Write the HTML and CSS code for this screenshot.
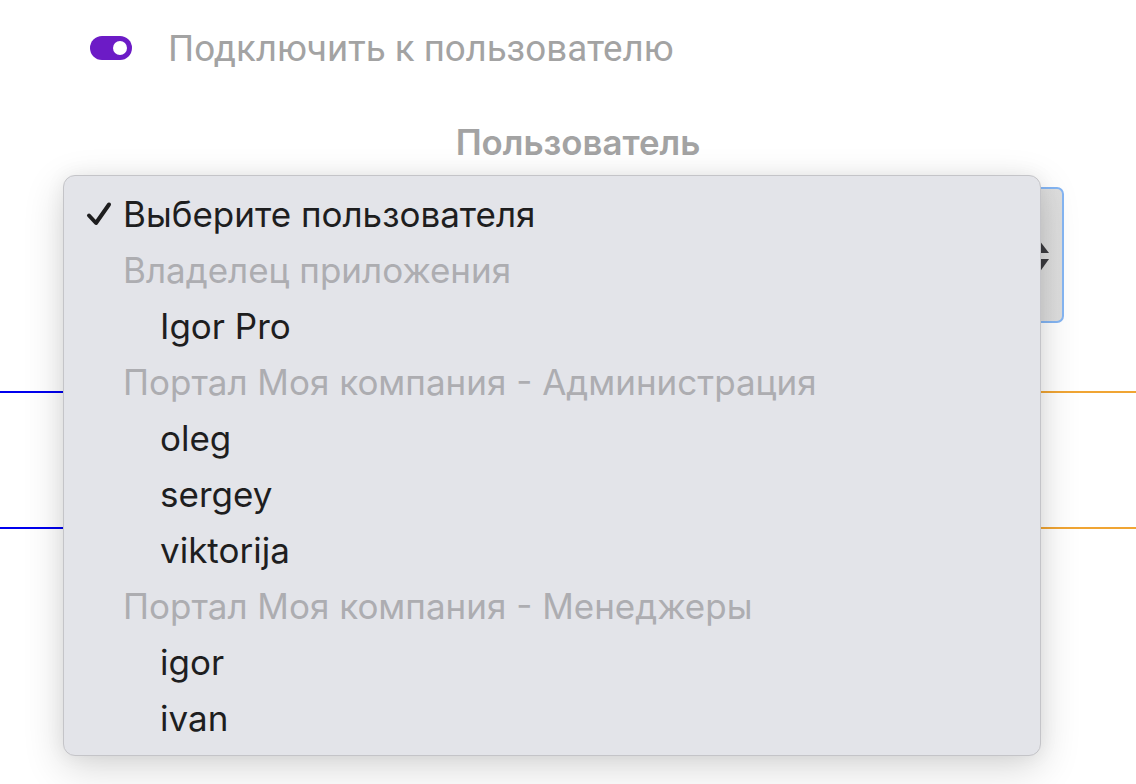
FILE: index.html
```html
<!DOCTYPE html>
<html>
<head>
<meta charset="utf-8">
<link rel="stylesheet" href="styles.css">
</head>
<body>
<div class="page">
  <div class="toggle-row">
    <span class="toggle"><span class="knob"></span></span>
    <span class="toggle-label">Подключить к пользователю</span>
  </div>
  <div class="field-label">Пользователь</div>
  <div class="select">
    <span class="arrows">
      <svg width="20" height="34" viewBox="0 0 20 34"><path d="M10 0 L20 13 L0 13 Z" fill="#3c3c40"/><path d="M0 19 L20 19 L10 33 Z" fill="#3c3c40"/></svg>
    </span>
  </div>
  <div class="rule rule-1"></div>
  <div class="rule rule-2"></div>
</div>
<div class="menu">
  <div class="item selected"><svg class="check" width="28" height="28" viewBox="0 0 28 28"><path d="M4 14.5 L11 22 L24 3.5" fill="none" stroke="#1e1e1f" stroke-width="4" stroke-linecap="round" stroke-linejoin="round"/></svg>Выберите пользователя</div>
  <div class="item group">Владелец приложения</div>
  <div class="item option">Igor Pro</div>
  <div class="item group">Портал Моя компания - Администрация</div>
  <div class="item option">oleg</div>
  <div class="item option">sergey</div>
  <div class="item option">viktorija</div>
  <div class="item group">Портал Моя компания - Менеджеры</div>
  <div class="item option">igor</div>
  <div class="item option">ivan</div>
</div>
</body>
</html>
```
FILE: styles.css
```css
html, body {
  margin: 0;
  padding: 0;
  background: #ffffff;
  width: 1136px;
  height: 784px;
  overflow: hidden;
  font-family: Roboto, "Liberation Sans", sans-serif;
}
.page {
  padding-top: 30px;
}
.toggle-row {
  display: flex;
  align-items: center;
  gap: 36px;
  padding-left: 90px;
  height: 36px;
}
.toggle {
  width: 42px;
  height: 24px;
  border-radius: 12px;
  background: #6c1bc6;
  display: flex;
  align-items: center;
  justify-content: flex-end;
  padding-right: 5px;
  box-sizing: border-box;
}
.knob {
  width: 14px;
  height: 14px;
  border-radius: 50%;
  background: #fff;
}
.toggle-label {
  font-size: 36.7px;
  color: #a3a3a3;
}
.field-label {
  margin-top: 58px;
  text-align: center;
  padding-left: 20px;
  font-family: Inter, "Liberation Sans", Arial, sans-serif;
  font-weight: 600;
  font-size: 34.8px;
  color: #a3a3a3;
  height: 36px;
  line-height: 36px;
}
.select {
  margin-top: 27px;
  margin-left: 92px;
  width: 972px;
  height: 136px;
  box-sizing: border-box;
  border: 2px solid #85b6f4;
  border-radius: 7px;
  background: linear-gradient(to right, #d6d6d6, #e6e6e6 85%, #dedede);
  display: flex;
  align-items: center;
  justify-content: flex-end;
  padding-right: 13px;
}
.arrows {
  display: flex;
  margin-top: 4px;
}
.rule {
  height: 2px;
  background: linear-gradient(to right, #0000ee 0, #0000ee 50%, #f0a534 50%, #f0a534 100%);
}
.rule-1 { margin-top: 68px; }
.rule-2 { margin-top: 134px; }
.menu {
  position: absolute;
  left: 63px;
  top: 175px;
  width: 978px;
  height: 581px;
  box-sizing: border-box;
  background: #e3e4e9;
  border: 1px solid #c4c4c8;
  border-radius: 12px;
  box-shadow: 0 12px 40px rgba(0, 0, 0, 0.16), 0 0 20px rgba(0,0,0,0.06);
  padding-top: 10px;
  font-family: Inter, "Liberation Sans", Arial, sans-serif;
  font-size: 35px;
}
.item {
  height: 56px;
  line-height: 56px;
  color: #1e1e1f;
  padding-left: 59px;
  position: relative;
  white-space: nowrap;
}
.item.group {
  color: #adadb1;
}
.item.option {
  padding-left: 96px;
}
.check {
  position: absolute;
  left: 21px;
  top: 15px;
}
```
